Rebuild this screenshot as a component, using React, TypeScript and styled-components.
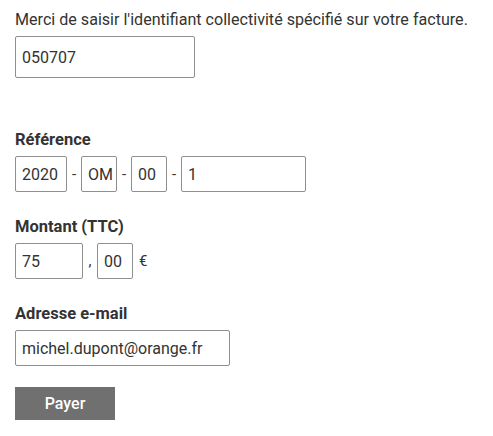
import { createGlobalStyle, styled } from 'styled-components';

const GlobalStyle = createGlobalStyle`
    html, body {
        margin: 0;
        padding: 0;
        background: #ffffff;
    }

    body {
        font-family: Roboto, "Liberation Sans", sans-serif;
        color: #333333;
    }
`;

const Form = styled.form`
    display: flex;
    flex-direction: column;
    align-items: flex-start;
    padding: 10px 15px 0;
`;

const Intro = styled.p`
    margin: 0;
    font-size: 16.1px;
    line-height: 20px;
    color: #333333;
`;

const Section = styled.div<{ $top: number }>`
    display: flex;
    flex-direction: column;
    align-items: flex-start;
    margin-top: ${p => p.$top}px;
`;

const Label = styled.label`
    font-size: 16.5px;
    font-weight: 700;
    line-height: 20px;
    color: #333333;
    margin-bottom: 6px;
`;

const Row = styled.div`
    display: flex;
    align-items: center;
`;

const Field = styled.input<{ $width: number; $height?: number }>`
    box-sizing: border-box;
    width: ${p => p.$width}px;
    height: ${p => p.$height ?? 36}px;
    padding: 0 0 0 6px;
    border: 1px solid #8f8f8f;
    border-radius: 2px;
    font-family: Roboto, "Liberation Sans", sans-serif;
    font-size: 16px;
    color: #333333;
    background: #ffffff;
    outline: none;
`;

const Sep = styled.span`
    display: inline-block;
    width: 14px;
    text-align: center;
    font-size: 15px;
    color: #333333;
`;

const Unit = styled.span`
    margin-left: 6px;
    font-size: 15px;
    color: #333333;
`;

const PayButton = styled.button`
    width: 100px;
    height: 33px;
    border: none;
    border-radius: 0;
    background: #707070;
    color: #ffffff;
    font-family: Roboto, "Liberation Sans", sans-serif;
    font-size: 16px;
    font-weight: 500;
    cursor: pointer;
`;

export default function App() {
    return (
        <>
            <GlobalStyle />
            <Form onSubmit={e => e.preventDefault()}>
                <Intro>Merci de saisir l'identifiant collectivité spécifié sur votre facture.</Intro>
                <Section $top={6}>
                    <Field $width={180} $height={42} defaultValue="050707" />
                </Section>

                <Section $top={52}>
                    <Label>Référence</Label>
                    <Row>
                        <Field $width={52} defaultValue="2020" />
                        <Sep>-</Sep>
                        <Field $width={36} defaultValue="OM" />
                        <Sep>-</Sep>
                        <Field $width={36} defaultValue="00" />
                        <Sep>-</Sep>
                        <Field $width={125} defaultValue="1" />
                    </Row>
                </Section>

                <Section $top={25}>
                    <Label>Montant (TTC)</Label>
                    <Row>
                        <Field $width={68} defaultValue="75" />
                        <Sep>,</Sep>
                        <Field $width={36} defaultValue="00" />
                        <Unit>€</Unit>
                    </Row>
                </Section>

                <Section $top={25}>
                    <Label>Adresse e-mail</Label>
                    <Field $width={215} defaultValue="michel.dupont@orange.fr" />
                </Section>

                <Section $top={21}>
                    <PayButton type="submit">Payer</PayButton>
                </Section>
            </Form>
        </>
    );
}
